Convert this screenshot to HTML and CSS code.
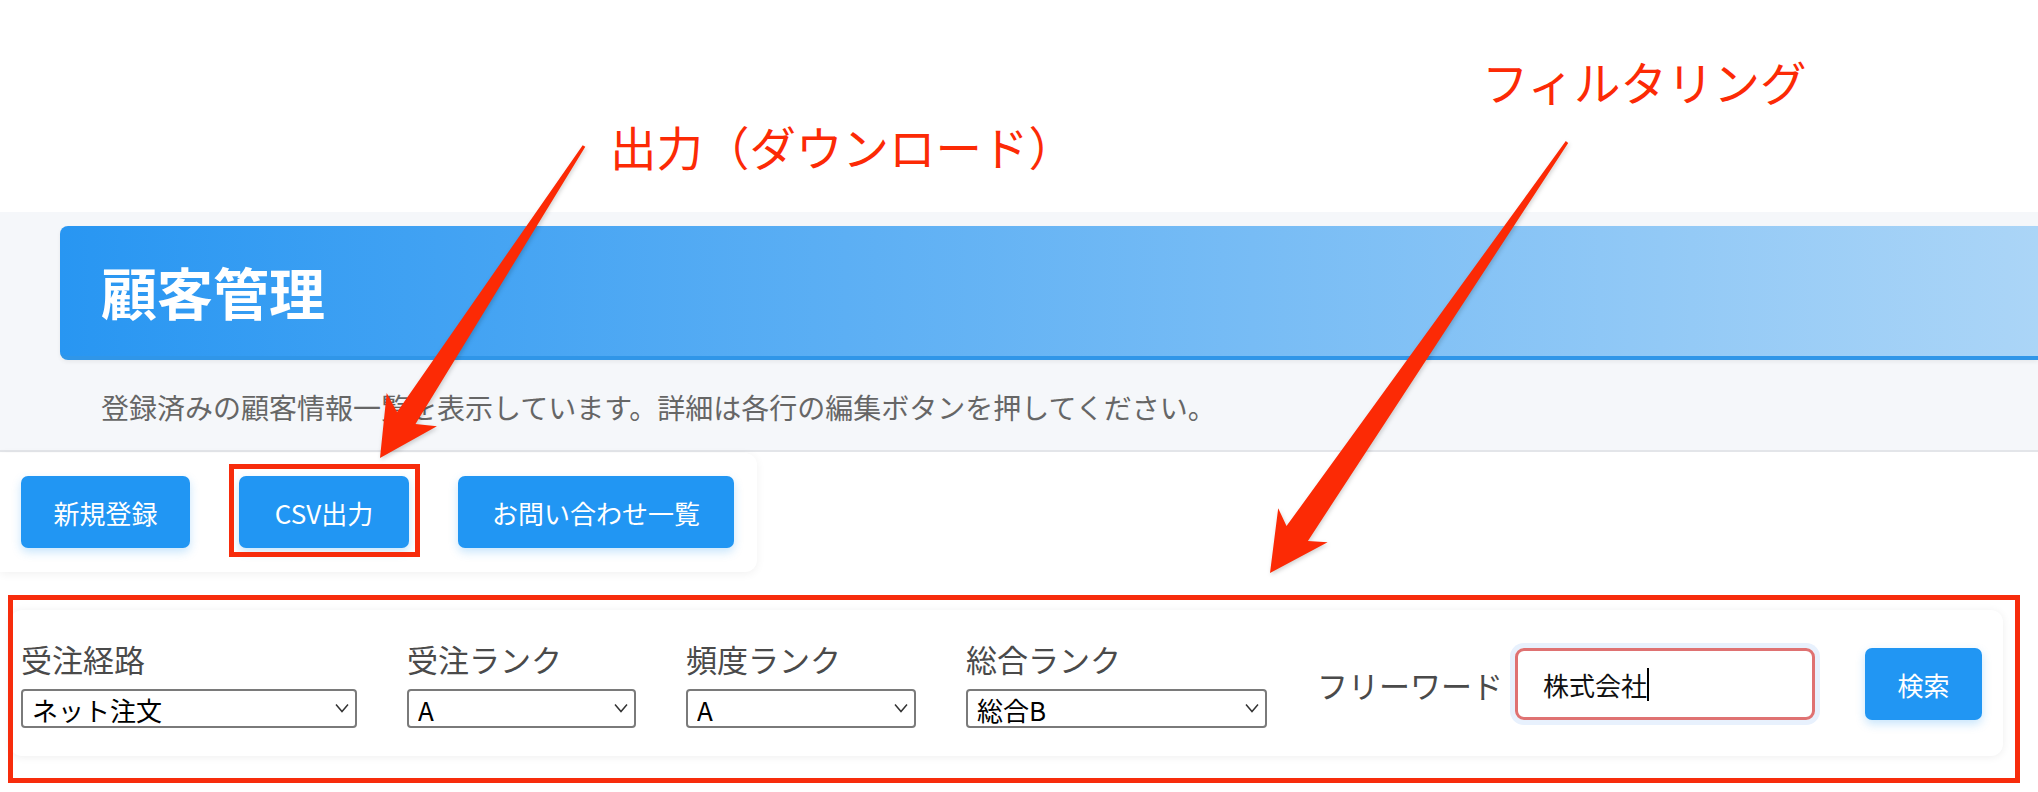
FILE: index.html
```html
<!DOCTYPE html>
<html lang="ja">
<head>
    <meta charset="UTF-8">
    <meta name="viewport" content="width=device-width, initial-scale=1.0">
    <title>顧客管理</title>
    <link rel="stylesheet" href="styles.css">
</head>
<body>
    <!-- Space above the page, used by the notes -->
    <div class="annot-space"></div>

    <!-- Page header -->
    <section class="summary">
        <div class="banner">
            <h1>顧客管理</h1>
        </div>
        <p class="lead">登録済みの顧客情報一覧を表示しています。詳細は各行の編集ボタンを押してください。</p>
    </section>

    <!-- Actions -->
    <div class="toolbar">
        <button class="btn btn-new" type="button">新規登録</button>
        <button class="btn btn-csv" type="button">CSV出力</button>
        <button class="btn btn-contact" type="button">お問い合わせ一覧</button>
    </div>

    <!-- Filters -->
    <form class="filters">
        <div class="field">
            <label>受注経路</label>
            <div class="select-wrap w-route">
                <select><option>ネット注文</option></select>
                <svg class="chev" viewBox="0 0 14 9"><polyline points="1,1 7,8 13,1"/></svg>
            </div>
        </div>
        <div class="field">
            <label>受注ランク</label>
            <div class="select-wrap w-order">
                <select><option>A</option></select>
                <svg class="chev" viewBox="0 0 14 9"><polyline points="1,1 7,8 13,1"/></svg>
            </div>
        </div>
        <div class="field">
            <label>頻度ランク</label>
            <div class="select-wrap w-freq">
                <select><option>A</option></select>
                <svg class="chev" viewBox="0 0 14 9"><polyline points="1,1 7,8 13,1"/></svg>
            </div>
        </div>
        <div class="field">
            <label>総合ランク</label>
            <div class="select-wrap w-total">
                <select><option>総合B</option></select>
                <svg class="chev" viewBox="0 0 14 9"><polyline points="1,1 7,8 13,1"/></svg>
            </div>
        </div>
        <div class="free-field">
            <label>フリーワード</label>
            <div class="keyword">株式会社<span class="caret"></span></div>
        </div>
        <button class="btn btn-search" type="button">検索</button>
    </form>

    <!-- Notes drawn over the screenshot -->
    <div class="annotations">
        <span class="note note-export">出力（ダウンロード）</span>
        <span class="note note-filter">フィルタリング</span>
        <div class="mark mark-csv"></div>
        <div class="mark mark-filter"></div>
        <svg class="arrows" width="2038" height="792" viewBox="0 0 2038 792">
            <polygon points="582.7,145.2 397.1,411.9 386.7,393.0 380,458 436.9,426.3 415.5,423.9 585.3,146.8"/>
            <polygon points="1565.8,141.1 1286.5,526.1 1278.2,508.2 1270,573 1327.6,542.2 1307.9,540.9 1568.2,142.9"/>
        </svg>
    </div>
</body>
</html>
```

FILE: styles.css
```css
/* Global Styling */
html {
    overflow: hidden;
}

body {
    margin: 0;
    position: relative;
    min-height: 792px;
    background: #ffffff;
    font-family: "Noto Sans CJK JP", "Noto Sans", sans-serif;
    color: #333333;
}

.annot-space {
    height: 212px;
}

/* Header */
.summary {
    background: #f5f7fa;
    padding: 14px 0 0 60px;
    border-bottom: 2px solid #e3e5e9;
}

.banner {
    height: 130px;
    display: flex;
    align-items: center;
    padding-left: 41px;
    background: linear-gradient(to right, #2896f2, #abd5f7);
    border-bottom: 4px solid #3096e8;
    border-radius: 8px 0 0 8px;
    box-shadow: 0 2px 4px rgba(0, 0, 0, 0.06);
}

.banner h1 {
    margin: 0;
    font-size: 56px;
    font-weight: 700;
    line-height: 1.2;
    color: #ffffff;
}

.lead {
    margin: 0;
    padding: 27px 0 23px 41px;
    font-size: 28px;
    line-height: 40px;
    color: #666666;
}

/* Buttons */
.toolbar {
    width: 757px;
    box-sizing: border-box;
    margin-top: 1px;
    display: flex;
    gap: 49px;
    padding: 23px 23px 24px 21px;
    background: #ffffff;
    border-radius: 0 12px 12px 0;
    box-shadow: 0 2px 10px rgba(0, 0, 0, 0.06);
}

.btn {
    height: 72px;
    padding: 0;
    border: none;
    border-radius: 7px;
    background: #2196f3;
    color: #ffffff;
    font-family: inherit;
    font-size: 26px;
    cursor: pointer;
    box-shadow: 0 4px 10px rgba(33, 150, 243, 0.25);
}

.btn-new { width: 169px; }
.btn-csv { width: 170px; }
.btn-contact { width: 276px; }
.btn-search { width: 117px; }

/* Filters */
.filters {
    margin: 38px 35px 0 10px;
    padding: 30px 11px 28px;
    display: flex;
    align-items: center;
    gap: 50px;
    background: #ffffff;
    border-radius: 12px;
    box-shadow: 0 1px 8px rgba(0, 0, 0, 0.07);
}

.field {
    display: flex;
    flex-direction: column;
    gap: 12px;
}

.field label,
.free-field label {
    font-size: 31px;
    line-height: 37px;
    color: #4a4a4a;
}

.select-wrap {
    position: relative;
}

.select-wrap select {
    width: 100%;
    height: 39px;
    box-sizing: border-box;
    padding: 0 30px 0 9px;
    appearance: none;
    border: 2px solid #7a7a7a;
    border-radius: 4px;
    background: #ffffff;
    font-family: inherit;
    font-size: 26px;
    color: #000000;
}

.chev {
    position: absolute;
    right: 8px;
    top: 14px;
    width: 14px;
    height: 10px;
    fill: none;
    stroke: #333333;
    stroke-width: 1.5;
}

.w-route { width: 336px; }
.w-order { width: 229px; }
.w-freq { width: 230px; }
.w-total { width: 301px; }

.free-field {
    display: flex;
    align-items: center;
    gap: 12px;
}

.keyword {
    width: 300px;
    height: 72px;
    box-sizing: border-box;
    display: flex;
    align-items: center;
    padding: 0 25px;
    border: 3px solid #df7272;
    border-radius: 9px;
    box-shadow: 0 0 0 5px #e8f1fd;
    font-size: 26px;
    color: #111111;
}

.caret {
    width: 2px;
    height: 33px;
    background: #000000;
}

/* Notes over the screenshot */
.annotations {
    position: absolute;
    top: 0;
    left: 0;
    width: 2038px;
    height: 792px;
    pointer-events: none;
}

.note {
    position: absolute;
    font-size: 46.5px;
    line-height: 46px;
    color: #fc2a05;
    white-space: nowrap;
}

.note-export {
    left: 610px;
    top: 123px;
}

.note-filter {
    left: 1482px;
    top: 58px;
}

.mark {
    position: absolute;
    box-sizing: border-box;
    border: 5px solid #f72c0c;
}

.mark-csv {
    left: 229px;
    top: 464px;
    width: 191px;
    height: 93px;
}

.mark-filter {
    left: 8px;
    top: 595px;
    width: 2012px;
    height: 188px;
}

.arrows {
    position: absolute;
    top: 0;
    left: 0;
    fill: #fc2a05;
    filter: drop-shadow(1px 2px 2px rgba(0, 0, 0, 0.18));
}
```
